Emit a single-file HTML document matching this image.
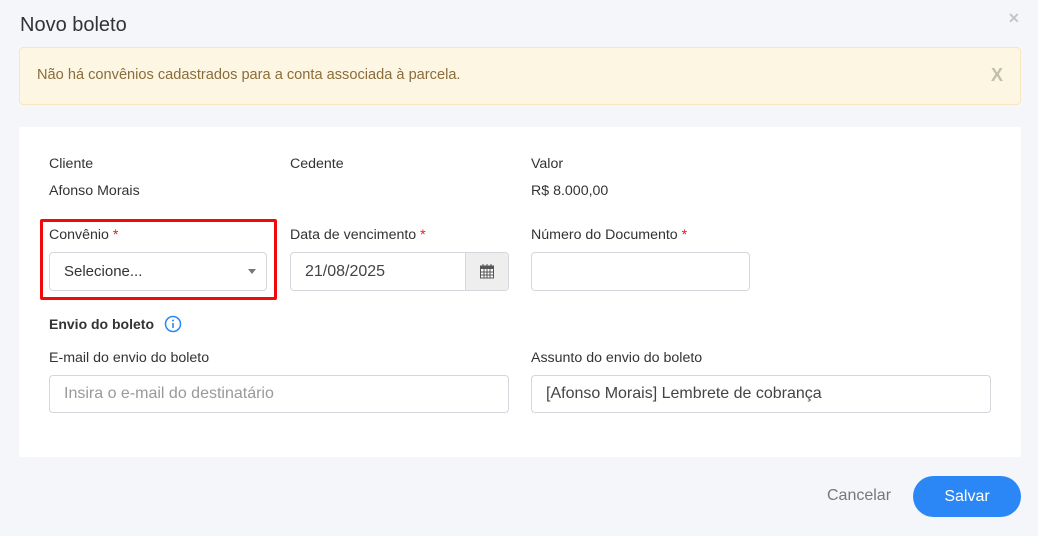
<!DOCTYPE html>
<html><head><meta charset="utf-8"><style>
*{box-sizing:border-box;margin:0;padding:0}
body{width:1038px;height:536px;background:#f4f6fa;font-family:"Liberation Sans",Arial,sans-serif;position:relative;overflow:hidden;color:#333}
.a{position:absolute}
.lbl{font-size:14.2px;color:#333;line-height:16px}
.req{color:#e02020}
.inp{position:absolute;background:#fff;border:1px solid #d4d7dc;border-radius:4px;font-size:16px;color:#444;padding-left:14px;display:flex;align-items:center}
</style></head><body>
<div class="a" style="left:20px;top:14px;font-size:20px;color:#333">Novo boleto</div>
<div class="a" style="left:1008px;top:10px;font-size:14px;color:#c4c4c4;font-weight:bold">✕</div>
<div class="a" style="left:19px;top:47px;width:1002px;height:58px;background:#fdf6e2;border:1px solid #f7e6c0;border-radius:4px"></div>
<div class="a" style="left:37px;top:67px;font-size:14.6px;color:#8a6d3b">Não há convênios cadastrados para a conta associada à parcela.</div>
<div class="a" style="left:991px;top:65px;font-size:18px;color:#c2bfa8;font-weight:bold">X</div>
<div class="a" style="left:19px;top:127px;width:1002px;height:330px;background:#fff"></div>
<div class="a lbl" style="left:49px;top:156px">Cliente</div>
<div class="a lbl" style="left:49px;top:183px">Afonso Morais</div>
<div class="a lbl" style="left:290px;top:156px">Cedente</div>
<div class="a lbl" style="left:531px;top:156px">Valor</div>
<div class="a lbl" style="left:531px;top:183px">R$ 8.000,00</div>
<div class="a lbl" style="left:49px;top:227px">Convênio <span class="req">*</span></div>
<div class="a lbl" style="left:290px;top:227px">Data de vencimento <span class="req">*</span></div>
<div class="a lbl" style="left:531px;top:227px">Número do Documento <span class="req">*</span></div>
<div class="inp" style="left:49px;top:252px;width:218px;height:39px;font-size:15px;color:#333">Selecione...</div>
<div class="a" style="left:248px;top:269px;width:0;height:0;border-left:4px solid transparent;border-right:4px solid transparent;border-top:5px solid #777"></div>
<div class="a" style="left:40px;top:219px;width:237px;height:81px;border:3px solid #f00a0a;border-radius:2px"></div>
<div class="inp" style="left:290px;top:252px;width:219px;height:39px">21/08/2025</div>
<div class="a" style="left:465px;top:253px;width:43px;height:37px;background:#eee;border-left:1px solid #d4d7dc;border-radius:0 4px 4px 0"></div>
<svg class="a" style="left:480px;top:263px" width="14" height="16" viewBox="0 0 14 16"><rect x="0.5" y="3" width="13" height="12" fill="#fff" stroke="#555"/><rect x="0.5" y="3" width="13" height="3" fill="#555"/><path d="M3 1v4M7 1v4M11 1v4M0 9h14M0 12h14M4 6v9M7 6v9M10 6v9" stroke="#555" stroke-width="1"/></svg>
<div class="inp" style="left:531px;top:252px;width:219px;height:39px"></div>
<div class="a" style="left:49px;top:316px;font-size:14px;font-weight:bold;color:#333">Envio do boleto</div>
<svg class="a" style="left:164px;top:315px" width="18" height="18" viewBox="0 0 18 18"><circle cx="9" cy="9" r="7.5" fill="none" stroke="#2a87f5" stroke-width="1.5"/><circle cx="9" cy="5.5" r="1" fill="#2a87f5"/><path d="M9 8v5" stroke="#2a87f5" stroke-width="1.6"/></svg>
<div class="a lbl" style="left:49px;top:350px">E-mail do envio do boleto</div>
<div class="a lbl" style="left:531px;top:350px">Assunto do envio do boleto</div>
<div class="inp" style="left:49px;top:375px;width:460px;height:38px;color:#999">Insira o e-mail do destinatário</div>
<div class="inp" style="left:531px;top:375px;width:460px;height:38px;color:#444">[Afonso Morais] Lembrete de cobrança</div>
<div class="a" style="left:827px;top:487px;font-size:16px;color:#777">Cancelar</div>
<div class="a" style="left:913px;top:476px;width:108px;height:41px;background:#2a87f5;border-radius:21px;color:#fff;font-size:16px;display:flex;align-items:center;justify-content:center">Salvar</div>
</body></html>
